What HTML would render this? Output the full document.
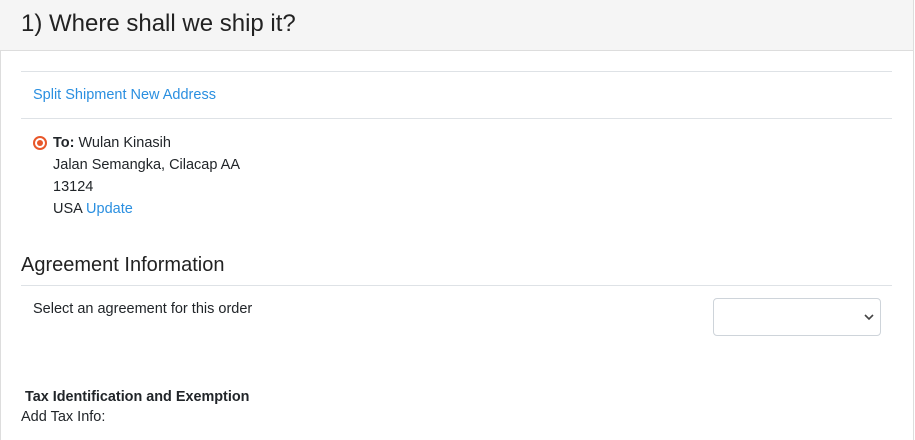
<!DOCTYPE html>
<html><head><style>
body{margin:0;width:915px;height:432px;overflow:hidden;background:#fff;font-family:"Liberation Sans",sans-serif;color:#212529;position:relative}
.box{position:absolute;left:0;top:0;width:912px;height:440px;border-left:1px solid #ddd;border-right:1px solid #ddd}
.hdr{position:absolute;left:0;top:0;width:913px;height:50px;background:#f5f5f5;border-bottom:1px solid #ddd}
.t{position:absolute;white-space:nowrap}
.hr{position:absolute;left:21px;width:871px;height:1px;background:#dee2e6}
a{color:#2a8fe0;text-decoration:none}
</style></head><body>
<div class="box"></div>
<div class="hdr"></div>
<div class="t" style="left:21px;top:10px;font-size:24px;color:#222">1) Where shall we ship it?</div>
<div class="hr" style="top:71px"></div>
<div class="t" style="left:33px;top:87px;font-size:14.5px"><a>Split Shipment New Address</a></div>
<div class="hr" style="top:118px"></div>
<div style="position:absolute;left:33px;top:136px;width:10px;height:10px;border:2px solid #e8572a;border-radius:50%"></div>
<div style="position:absolute;left:37px;top:140px;width:6px;height:6px;background:#e8572a;border-radius:50%"></div>
<div class="t" style="left:53px;top:132px;font-size:14.5px;line-height:22px"><b>To:</b> Wulan Kinasih<br>Jalan Semangka, Cilacap AA<br>13124<br>USA <a>Update</a></div>
<div class="t" style="left:21px;top:254px;font-size:20px;color:#222">Agreement Information</div>
<div class="hr" style="top:285px"></div>
<div class="t" style="left:33px;top:301px;font-size:14.5px">Select an agreement for this order</div>
<div style="position:absolute;left:713px;top:298px;width:166px;height:36px;border:1px solid #ced4da;border-radius:4px"></div>
<svg style="position:absolute;left:864px;top:313px" width="10" height="8"><path d="M1 2l4 4 4-4" stroke="#444" stroke-width="1.6" fill="none"/></svg>
<div class="t" style="left:25px;top:389px;font-size:14.4px;font-weight:bold">Tax Identification and Exemption</div>
<div class="t" style="left:21px;top:409px;font-size:14.5px">Add Tax Info:</div>
</body></html>
